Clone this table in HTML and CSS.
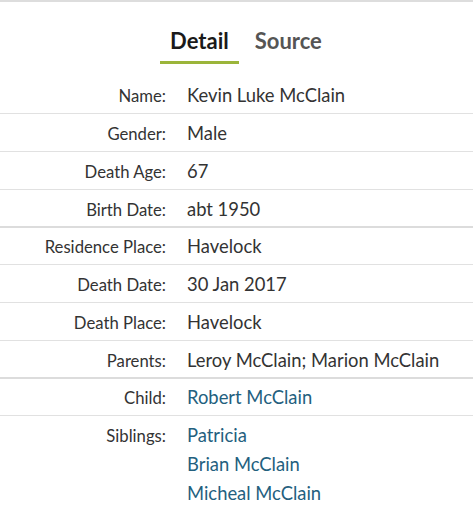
FILE: index.html
```html
<!DOCTYPE html>
<html>
<head>
<meta charset="utf-8">
<link rel="stylesheet" href="styles.css">
</head>
<body>
<div class="panel">
  <div class="tabs">
    <div class="tab active">Detail</div>
    <div class="tab">Source</div>
  </div>
  <div class="rows">
    <div class="row"><div class="label">Name:</div><div class="value">Kevin Luke McClain</div></div>
    <div class="row"><div class="label">Gender:</div><div class="value">Male</div></div>
    <div class="row"><div class="label">Death Age:</div><div class="value">67</div></div>
    <div class="row group-end"><div class="label">Birth Date:</div><div class="value">abt 1950</div></div>
    <div class="row short"><div class="label">Residence Place:</div><div class="value">Havelock</div></div>
    <div class="row"><div class="label">Death Date:</div><div class="value">30 Jan 2017</div></div>
    <div class="row"><div class="label">Death Place:</div><div class="value">Havelock</div></div>
    <div class="row group-end"><div class="label">Parents:</div><div class="value">Leroy McClain; Marion McClain</div></div>
    <div class="row short"><div class="label">Child:</div><div class="value"><a class="link">Robert McClain</a></div></div>
    <div class="row last"><div class="label">Siblings:</div><div class="value list"><a class="link">Patricia</a><a class="link">Brian McClain</a><a class="link">Micheal McClain</a></div></div>
  </div>
</div>
</body>
</html>
```
FILE: styles.css
```css
html, body { margin: 0; padding: 0; background: #fff; }
body { font-family: "Source Sans Pro", Lato, "Noto Sans", sans-serif; color: #333; }
.panel { border-top: 2px solid #ddd; }
.tabs { display: flex; justify-content: center; padding-top: 25px; padding-left: 19px; }
.tab { font-size: 22px; font-weight: 700; color: #555; padding: 0 10px 6px; border-bottom: 3px solid transparent; line-height: 28px; }
.tab + .tab { margin-left: 6px; }
.tab.active { color: #1a1a1a; border-bottom-color: #9bb53a; }
.rows { margin-top: 12px; }
.row { box-sizing: border-box; height: 38px; display: grid; grid-template-columns: 166px 1fr; column-gap: 21px; border-bottom: 1px solid #e1e1e1; padding-top: 9px; align-items: baseline; align-content: start; }
.row.group-end { border-bottom: 2px solid #dcdcdc; }
.row.short { height: 37px; padding-top: 8px; }
.row.last { border-bottom: none; height: auto; padding-top: 9px; }
.label { text-align: right; font-size: 16.7px; color: #333; line-height: 21px; }
.value { font-size: 18.4px; color: #333; line-height: 21px; }
.value.list { display: flex; flex-direction: column; row-gap: 8px; }
.link { color: #23607e; text-decoration: none; }
```
